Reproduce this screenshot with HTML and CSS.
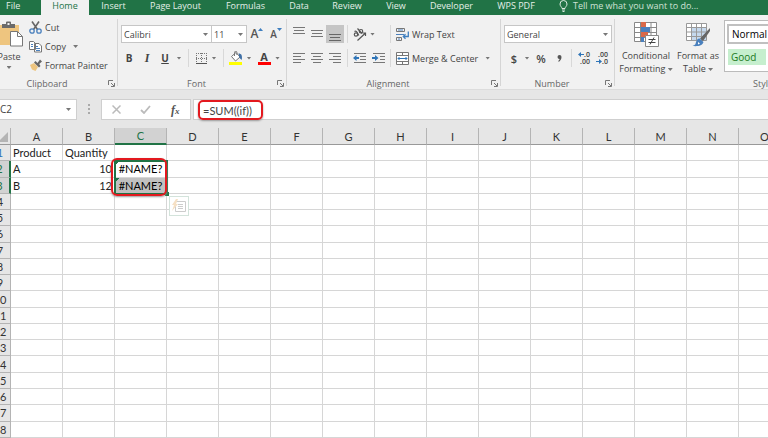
FILE: index.html
```html
<!DOCTYPE html>
<html lang="en">
<head>
<meta charset="utf-8">
<title>Workbook</title>
<link rel="stylesheet" href="styles.css">
</head>
<body>
<nav class="tabs" aria-label="Ribbon tabs">
  <button class="tab tab-file">File</button>
  <button class="tab tab-active">Home</button>
  <button class="tab">Insert</button>
  <button class="tab">Page Layout</button>
  <button class="tab">Formulas</button>
  <button class="tab">Data</button>
  <button class="tab">Review</button>
  <button class="tab">View</button>
  <button class="tab">Developer</button>
  <button class="tab">WPS PDF</button>
  <button class="tab tab-tell">
    <svg width="9" height="12" viewBox="0 0 9 12" fill="none" stroke="#dcebe2"><path d="M3 8.500C3 7 1 6.300 1 4a3.500 3.500 0 0 1 7 0C8 6.300 6 7 6 8.500zM3 10h3M3.500 11.500h2"/></svg>
    <span>Tell me what you want to do...</span>
  </button>
</nav>

<main class="ribbon">
  <section class="group clipboard" aria-label="Clipboard">
    <div class="body">
      <button class="paste">
        <svg width="28" height="26" viewBox="0 0 28 26"><path fill="#eec57f" d="M2 4h22v20H2z"/><path fill="#6a6a6a" d="M7 7V3h4V1.500a1 1 0 0 1 1-1h3a1 1 0 0 1 1 1V3h4v4z"/><path fill="#f1f1f1" d="M12.500 2h2v2h-2z"/><path fill="#fff" stroke="#777" d="M15.500 10.500h7l5 5v9.500h-12z"/><path fill="none" stroke="#777" d="M22.500 10.500v5h5"/></svg>
        <span>Paste</span>
        <i class="caret"></i>
      </button>
      <div class="stack">
        <button class="command">
          <svg width="13" height="13" viewBox="0 0 13 13" fill="none"><path stroke="#666" stroke-width="1.600" d="M3 .5l5.500 8M10 .5l-5.500 8"/><circle cx="3" cy="10" r="2.200" stroke="#4a80bd" stroke-width="1.300"/><circle cx="10" cy="10" r="2.200" stroke="#4a80bd" stroke-width="1.300"/></svg>
          <span>Cut</span>
        </button>
        <button class="command">
          <svg width="13" height="13" viewBox="0 0 13 13" fill="#fff" stroke="#777"><path d="M.5 1.500h4l2 2v6h-6zM5.500 3.500h4.500l2.500 2.500v6h-7z"/><path stroke="#4a80bd" d="M2 4.500h2M2 6.500h2M7 6.500h2M7 8.500h4M7 10.500h4"/></svg>
          <span>Copy</span><i class="caret"></i>
        </button>
        <button class="command">
          <svg width="13" height="13" viewBox="0 0 13 13"><path fill="#eec57f" d="M1 6l4-2 4 4-2.500 4L3 10.500z"/><path fill="#666" d="M5 3.500l1.500-1.500 2 2L11 .5l2 2-2.800 2.500L11.500 7 10 8.500z"/></svg>
          <span>Format Painter</span>
        </button>
      </div>
    </div>
    <h2 class="label">Clipboard</h2>
    <button class="launcher" aria-label="Clipboard settings"><svg width="7" height="7" viewBox="0 0 7 7"><path fill="none" stroke="#777" d="M.5 5V.5H5M3 3l3 3M6.500 3v3.500H3"/></svg></button>
  </section>

  <section class="group font" aria-label="Font">
    <div class="body rows">
      <div class="row font-top">
        <label class="picker"><select aria-label="Font name"><option>Calibri</option></select><i class="caret"></i></label>
        <label class="picker"><select aria-label="Font size"><option>11</option></select><i class="caret"></i></label>
        <button class="tool grow" aria-label="Increase font size"><b>A</b><svg width="5" height="3" viewBox="0 0 5 3"><path fill="#3f7fbf" d="M0 3l2.500-3L5 3z"/></svg></button>
        <button class="tool grow small" aria-label="Decrease font size"><b>A</b><svg width="5" height="3" viewBox="0 0 5 3"><path fill="#3f7fbf" d="M0 0h5L2.500 3z"/></svg></button>
      </div>
      <div class="row font-bottom">
        <button class="tool bold">B</button>
        <button class="tool italic">I</button>
        <button class="tool underline">U</button>
        <i class="caret"></i>
        <i class="rule"></i>
        <button class="tool" aria-label="Borders"><svg width="11" height="11" viewBox="0 0 11 11" fill="none" stroke="#777"><path stroke-dasharray="1 1" d="M.5 0v10M5.500 0v10M10.500 0v10M0 .5h11M0 5.500h11"/><path stroke="#555" d="M0 10.500h11"/></svg></button>
        <i class="caret"></i>
        <i class="rule"></i>
        <button class="tool" aria-label="Fill color"><svg width="14" height="14" viewBox="0 0 14 14"><path fill="#fff" stroke="#777" d="M2.500 5.500l4.500-4 4 4.500-4.500 4z"/><path fill="none" stroke="#777" d="M5.500 5V1.500a1.200 1.200 0 0 1 2.400 0V4"/><path fill="#3f6fa5" d="M9.500 2.500c3 0 4 2 3.200 6.500L10.500 7z"/><path fill="#ff0" d="M0 11h13v3H0z"/></svg></button>
        <i class="caret"></i>
        <button class="tool" aria-label="Font color"><span class="font-color">A</span></button>
        <i class="caret"></i>
      </div>
    </div>
    <h2 class="label">Font</h2>
    <button class="launcher" aria-label="Font settings"><svg width="7" height="7" viewBox="0 0 7 7"><path fill="none" stroke="#777" d="M.5 5V.5H5M3 3l3 3M6.500 3v3.500H3"/></svg></button>
  </section>

  <section class="group alignment" aria-label="Alignment">
    <div class="body rows">
      <div class="row align-row">
        <button class="tool" aria-label="Top align"><svg width="12" height="16" viewBox="0 0 12 16" stroke="#777"><path d="M0 1.500h12M1 4.500h10M0 7.500h12"/></svg></button>
        <button class="tool" aria-label="Middle align"><svg width="12" height="16" viewBox="0 0 12 16" stroke="#777"><path d="M0 4.500h12M1 7.500h10M0 10.500h12"/></svg></button>
        <button class="tool pressed" aria-label="Bottom align"><svg width="12" height="16" viewBox="0 0 12 16" stroke="#666"><path d="M0 8.500h12M1 11.500h10M0 14.500h12"/></svg></button>
        <i class="rule"></i>
        <button class="tool" aria-label="Orientation"><svg width="14" height="13" viewBox="0 0 14 13" fill="none" stroke="#555" stroke-width="1.200"><path d="M4.500 12.500L12 5.500M9.500 5h3v3"/><circle cx="3" cy="6.500" r="1.700"/><path d="M1.500 3.500c1.500-1 2.500 0 4.300 4M4.500.5l4.500 5"/><circle cx="8" cy="3.200" r="1.700"/></svg></button>
        <i class="caret"></i>
        <i class="rule"></i>
        <button class="command wide"><svg width="13" height="13" viewBox="0 0 13 13" fill="none"><path stroke="#777" d="M.5.5h8v3h-8zM.5 9.500h5v3h-5z"/><path stroke="#4a80bd" d="M2 2h5M0 6.500h8M2 11h2"/><path stroke="#3f7fbf" stroke-width="1.300" d="M12.300 3.500v5H7.500M9.500 6.300L7.300 8.500l2.200 2.200"/></svg><span>Wrap Text</span></button>
      </div>
      <div class="row align-row">
        <button class="tool" aria-label="Align left"><svg width="12" height="10" viewBox="0 0 12 10" stroke="#777"><path d="M0 .5h12M0 3.500h8M0 6.500h12M0 9.500h8"/></svg></button>
        <button class="tool" aria-label="Center"><svg width="12" height="10" viewBox="0 0 12 10" stroke="#777"><path d="M0 .5h12M2 3.500h8M0 6.500h12M2 9.500h8"/></svg></button>
        <button class="tool" aria-label="Align right"><svg width="12" height="10" viewBox="0 0 12 10" stroke="#777"><path d="M0 .5h12M4 3.500h8M0 6.500h12M4 9.500h8"/></svg></button>
        <i class="rule"></i>
        <button class="tool" aria-label="Decrease indent"><svg width="14" height="12" viewBox="0 0 14 12"><path stroke="#777" d="M1 1.500h12M7 4.500h6M7 7.500h6M1 10.500h12"/><path fill="#2f75b8" d="M0 6l3.500-3v2H6v2H3.500v2z"/></svg></button>
        <button class="tool" aria-label="Increase indent"><svg width="14" height="12" viewBox="0 0 14 12"><path stroke="#777" d="M1 1.500h12M8 4.500h5M8 7.500h5M1 10.500h12"/><path fill="#2f75b8" d="M6.500 6L3 3v2H0v2h3v2z"/></svg></button>
        <i class="rule"></i>
        <button class="command wide"><svg width="13" height="13" viewBox="0 0 13 13" fill="#fff" stroke="#777"><path d="M.5.5h12v12H.5zM.5 3.500h12M.5 9.500h12M6.500.5v3M6.500 9.500v3"/><path fill="none" stroke="#2f75b8" d="M2 6.500h9M3.500 5L2 6.500 3.500 8M9.500 5L11 6.500 9.500 8"/></svg><span>Merge &amp; Center</span><i class="caret"></i></button>
      </div>
    </div>
    <h2 class="label">Alignment</h2>
    <button class="launcher" aria-label="Alignment settings"><svg width="7" height="7" viewBox="0 0 7 7"><path fill="none" stroke="#777" d="M.5 5V.5H5M3 3l3 3M6.500 3v3.500H3"/></svg></button>
  </section>

  <section class="group number" aria-label="Number">
    <div class="body rows">
      <div class="row number-top">
        <label class="picker"><select aria-label="Number format"><option>General</option></select><i class="caret"></i></label>
      </div>
      <div class="row number-bottom">
        <button class="tool symbol">$</button>
        <i class="caret"></i>
        <button class="tool symbol">%</button>
        <button class="tool" aria-label="Comma style"><svg width="5" height="7" viewBox="0 0 5 7"><path fill="#555" d="M.5 2a2 2 0 0 1 4 0c0 2.500-1.500 4-3 5V5.500C2.300 5 2.500 4.500 2.500 4A2 2 0 0 1 .5 2z"/></svg></button>
        <i class="rule"></i>
        <button class="tool decimals" aria-label="Increase decimal"><span><svg width="6" height="5" viewBox="0 0 6 5"><path fill="#2f75b8" d="M0 2.500L3 0v2h3v1H3v2z"/></svg>.0</span><span>.00</span></button>
        <button class="tool decimals" aria-label="Decrease decimal"><span>.00</span><span><svg width="6" height="5" viewBox="0 0 6 5"><path fill="#2f75b8" d="M6 2.500L3 0v2H0v1h3v2z"/></svg>.0</span></button>
      </div>
    </div>
    <h2 class="label">Number</h2>
    <button class="launcher" aria-label="Number settings"><svg width="7" height="7" viewBox="0 0 7 7"><path fill="none" stroke="#777" d="M.5 5V.5H5M3 3l3 3M6.500 3v3.500H3"/></svg></button>
  </section>

  <section class="group styles" aria-label="Styles">
    <div class="body">
      <button class="large">
        <svg width="26" height="26" viewBox="0 0 26 26"><path fill="#fff" stroke="#888" d="M1.500 1.500h22v19h-22zM1.500 6.500h22M1.500 11.500h22M1.500 16.500h22M7.500 1.500v19M12.500 1.500v19M18 1.500v19"/><path fill="#d9694a" d="M8 1h5v5H8zM8 11h7v5H8z"/><path fill="#4a80bd" d="M8 6h9v5H8zM8 16h3v5H8z"/><path fill="#fff" stroke="#888" d="M12.500 14.500h13v11h-13z"/><path stroke="#444" d="M15.500 18.500h7M15.500 21.500h7M21 16.500l-4 7"/></svg>
        <span>Conditional</span><span>Formatting <i class="caret"></i></span>
      </button>
      <button class="large">
        <svg width="26" height="26" viewBox="0 0 26 26"><path fill="#fff" d="M2 2h19v18H2z"/><path fill="#c5d9ee" d="M7 6h14v14H7z"/><path fill="none" stroke="#999" d="M1.500 2.500h20v17h-20zM1.500 6.500h20M1.500 11h20M1.500 15.500h20M6.500 2.500v17M11.500 2.500v17M16.500 2.500v17"/><path fill="#666" d="M25 7v3l-7 10-3-2.500z"/><path fill="#4a80bd" d="M14.500 17.500l4 3.500c-1 4-6 4.500-11 4 3-1 3-2 3.500-4 .5-2 1.800-3.300 3.500-3.500z"/><path fill="#fff" d="M13 21l2 1.500-2 1z"/></svg>
        <span>Format as</span><span>Table <i class="caret"></i></span>
      </button>
      <div class="gallery">
        <button class="swatch swatch-normal">Normal</button>
        <button class="swatch swatch-good">Good</button>
      </div>
    </div>
    <h2 class="label">Styles</h2>
  </section>
</main>

<div class="formula-bar">
  <label class="name-box"><input aria-label="Name box" value="C2"><i class="caret"></i></label>
  <svg class="grip" width="3" height="11" viewBox="0 0 3 11" fill="#aaa"><path d="M0 0h2v2H0zM0 4h2v2H0zM0 8h2v2H0z"/></svg>
  <div class="entry">
    <button class="tool" aria-label="Cancel"><svg width="9" height="9" viewBox="0 0 9 9" stroke="#bbb" stroke-width="1.500"><path d="M.5.500l8 8M8.500.500l-8 8"/></svg></button>
    <button class="tool" aria-label="Enter"><svg width="11" height="9" viewBox="0 0 11 9" fill="none" stroke="#bbb" stroke-width="1.800"><path d="M1 5l3 3 6-7"/></svg></button>
    <button class="tool fx" aria-label="Insert function"><i>f</i><small>x</small></button>
  </div>
  <div class="formula">
    <input aria-label="Formula" value="=SUM((if))">
  </div>
</div>

<div class="sheet">
  <table>
    <thead>
      <tr><th class="corner"><svg width="10" height="10" viewBox="0 0 10 10"><path fill="#b4b4b4" d="M10 0v10H0z"/></svg></th><th>A</th><th>B</th><th class="selected">C</th><th>D</th><th>E</th><th>F</th><th>G</th><th>H</th><th>I</th><th>J</th><th>K</th><th>L</th><th>M</th><th>N</th><th>O</th></tr>
    </thead>
    <tbody>
      <tr><th class="first">1</th><td>Product</td><td>Quantity</td><td></td><td></td><td></td><td></td><td></td><td></td><td></td><td></td><td></td><td></td><td></td><td></td><td></td></tr>
      <tr><th class="selected">2</th><td>A</td><td class="num">10</td><td class="error">#NAME?<div class="selection"></div><div class="callout"></div>
        <button class="quick" aria-label="Quick analysis"><svg width="14" height="14" viewBox="0 0 14 14" fill="none" stroke="#ccc"><path d="M3.500 2.500h10v10h-10zM6 5.500h5M6 7.500h5M6 9.500h5"/><path fill="#f6e0c4" stroke="none" d="M4 0L0 6h2L0 12l6-7H4l2-5z"/></svg></button></td><td></td><td></td><td></td><td></td><td></td><td></td><td></td><td></td><td></td><td></td><td></td><td></td></tr>
      <tr><th class="selected">3</th><td>B</td><td class="num">12</td><td class="error shaded">#NAME?</td><td></td><td></td><td></td><td></td><td></td><td></td><td></td><td></td><td></td><td></td><td></td><td></td></tr>
    </tbody>
  </table>
</div>
<script src="sheet.js"></script>
</body>
</html>
```
FILE: styles.css
```css
* { box-sizing: border-box; }

body {
  margin: 0;
  height: 100vh;
  display: flex;
  flex-direction: column;
  overflow: hidden;
  background: #fff;
  color: #444;
  font: 9px/13px "Open Sans", "Noto Sans", sans-serif;
}

button, input, select {
  margin: 0;
  padding: 0;
  border: 0;
  background: none;
  color: inherit;
  font: inherit;
}

svg { display: block; flex: none; }

.caret {
  display: inline-block;
  flex: none;
  width: 5px;
  height: 3px;
  background: #777;
  clip-path: polygon(0 0, 100% 0, 50% 100%);
}

/* Tabs */
.tabs {
  display: grid;
  grid-template-columns: 41px 48px 49px 75px 65px 42px 54px 44px 67px 62px 1fr;
  background: #217346;
  color: #e4efe8;
  white-space: nowrap;
}

.tab { height: 15px; padding-bottom: 3px; line-height: 12px; }
.tab-file { padding-left: 6px; text-align: left; }
.tab-active { background: #f1f1f1; color: #217346; }
.tab-tell { display: flex; align-items: center; gap: 5px; padding-left: 12px; color: #cfe2d6; }

/* Ribbon */
.ribbon {
  display: flex;
  height: 75px;
  background: #f1f1f1;
  border-bottom: 1px solid #dcdcdc;
  white-space: nowrap;
}

.group { position: relative; display: flex; flex-direction: column; flex: none; }
.group::after {
  content: "";
  position: absolute;
  top: 4px;
  right: 0;
  bottom: 3px;
  width: 1px;
  background: #d5d5d5;
}
.clipboard { width: 118px; }
.font { width: 169px; }
.alignment { width: 214px; }
.number { width: 114px; }
.styles { flex: 1; min-width: 153px; overflow: hidden; }
.styles::after { display: none; }

.body { display: flex; flex: none; height: 63px; padding-top: 3px; }
.rows { flex-direction: column; padding-top: 7px; }
.row { display: grid; align-items: center; height: 24px; }
.label { margin: 0; color: #666; font-size: 9px; font-weight: 400; line-height: 12px; text-align: center; }
.clipboard .label { padding-right: 24px; }
.font .label,
.alignment .label,
.number .label { padding-right: 12px; }
.styles .label { padding-left: 138px; text-align: left; }

.launcher { position: absolute; right: 3px; bottom: 2px; }

.paste {
  display: flex;
  flex-direction: column;
  align-items: center;
  gap: 3px;
  width: 28px;
  margin: 3px 6px 0 -5px;
}
.stack { display: grid; grid-template-rows: repeat(3, 19px); }
.command { display: flex; align-items: center; gap: 3px; }

.tool { display: flex; align-items: center; justify-content: center; height: 18px; }
.rule { width: 1px; height: 18px; background: #d8d8d8; justify-self: center; }
.row .caret { justify-self: center; }
.command .caret { margin-left: 4px; }

.picker {
  position: relative;
  display: flex;
  height: 18px;
  background: #fff;
  border: 1px solid #c6c6c6;
}
.picker select { flex: 1; min-width: 0; padding-left: 2px; appearance: none; }
.picker .caret { position: absolute; top: 7px; right: 3px; }

.font-top { grid-template-columns: 91px 35px 20px 18px; padding-left: 3px; }
.font-top .picker + .picker { margin-left: -1px; }
.grow { align-items: flex-start; font-size: 12px; line-height: 18px; color: #555; }
.grow b { font-weight: 600; }
.grow svg { margin-top: 3px; }
.small { font-size: 10px; }

.font-bottom { grid-template-columns: 18px 18px 18px 10px 9px 16px 10px 9px 16px 10px 20px 7px; padding-left: 2px; }
.bold { font-size: 10px; font-weight: 700; }
.italic { font: italic 700 12px "Liberation Serif", serif; }
.underline { font-size: 10px; font-weight: 700; text-decoration: underline; }
.font-color { width: 13px; border-bottom: 3px solid #f00; font-size: 11px; font-weight: 700; line-height: 11px; }

.align-row { grid-template-columns: 18px 18px 18px 6px 20px 18px 5px 1fr; padding-left: 3px; }
.align-row > .caret { justify-self: start; }
.wide { padding-left: 3px; }
.pressed { background: #c5c5c5; }

.number-top { padding: 0 3px; }
.number-bottom { grid-template-columns: 18px 8px 20px 16px 8px 18px 18px; padding-left: 4px; }
.symbol { font-size: 11px; font-weight: 600; }
.decimals { flex-direction: column; align-items: flex-end; font-size: 7px; font-weight: 600; line-height: 7px; padding-right: 3px; }
.decimals span { display: flex; align-items: center; }

.large {
  display: flex;
  flex-direction: column;
  align-items: center;
  width: 52px;
  margin-top: 3px;
}
.large svg { margin-bottom: 2px; }
.large .caret { vertical-align: middle; }
.styles .body { padding-left: 5px; }
.gallery {
  display: flex;
  flex-direction: column;
  flex: 1;
  gap: 3px;
  height: 52px;
  margin-top: 2px;
  padding: 3px 0 0 2px;
  background: #fff;
  border: 1px solid #bbb;
  border-right: 0;
}
.swatch { height: 20px; padding-left: 3px; border: 2px solid #fff; border-left-width: 1px; font-size: 10px; line-height: 12px; text-align: left; }
.swatch-normal { border-color: #c0c0c0; border-width: 2px 0 2px 2px; color: #000; }
.swatch-good { background: #c6efce; color: #1b7a1b; }

/* Formula bar */
.formula-bar {
  display: grid;
  grid-template-columns: 77px 24px 90px 1fr;
  align-items: center;
  height: 38px;
  padding: 9px 0 8px;
  background: #e6e6e6;
}
.name-box, .entry, .formula { height: 21px; background: #fff; border: 1px solid #cfcfcf; }
.name-box { display: flex; align-items: center; justify-content: space-between; border-left: 0; padding-right: 5px; }
.name-box input { width: 40px; font-size: 10px; }
.grip { justify-self: center; }
.entry { display: grid; grid-template-columns: 1fr 1fr 1fr; align-items: center; }
.fx { font: 700 12px/16px "Liberation Serif", serif; color: #555; }
.fx small { font-size: 9px; font-style: italic; padding-top: 3px; }
.formula { margin-left: 2px; padding: 0 4px; border-right: 0; }
.formula input {
  width: 65px;
  height: 20px;
  padding-left: 3px;
  border: 2px solid #e3191f;
  border-radius: 5px;
  box-shadow: 0 1px 2px #999;
  font: 11px "Lato", sans-serif;
}

/* Sheet */
.sheet { flex: 1; min-height: 0; background: #e6e6e6; }
table {
  width: 801px;
  height: 100%;
  margin-left: -10px;
  border-collapse: separate;
  border-spacing: 0;
  table-layout: fixed;
  background: #fff;
  color: #222;
  font: 11px/12px "Lato", sans-serif;
}
th, td { width: 52px; padding: 1px 2px 0; border: 0 solid #d6d6d6; border-width: 0 1px 1px 0; white-space: nowrap; }
th { background: #e6e6e6; border-color: #b4b4b4; color: #333; font-weight: 400; }
th:first-child { width: 21px; padding: 1px 0 0; }
thead th { height: 17px; border-bottom-color: #999; }
.corner svg { margin-left: 8px; }
th.selected { background: #d2d2d2; color: #217346; }
th.first { color: #2f75b8; }
thead .selected { border-bottom: 2px solid #217346; }
tbody .selected { border-right: 2px solid #217346; }
td { text-align: left; }
.num { text-align: right; }
.error { position: relative; color: #000; text-align: center; background: linear-gradient(135deg, #217346 3px, transparent 3px); }
.shaded { background: linear-gradient(135deg, #217346 3px, #c0c0c0 3px); }
.selection { position: absolute; z-index: 1; top: -1px; left: -1px; width: 54px; height: 35px; border: 2px solid #217346; }
.selection::after { content: ""; position: absolute; right: -3px; bottom: -3px; width: 4px; height: 4px; background: #217346; }
.callout { position: absolute; z-index: 2; top: -3px; left: -4px; width: 56px; height: 38px; border: 2px solid #e3191f; border-radius: 6px; box-shadow: 0 1px 2px #999; }
.quick { position: absolute; z-index: 1; top: 35px; left: 54px; width: 20px; height: 20px; padding: 2px; background: #fff; border: 1px solid #d3e3db; }
```
FILE: sheet.js
```js
// Fill the sheet with empty numbered rows below the data.
const body = document.querySelector("tbody");
for (let n = 4; n <= 18; n++) {
  const row = body.insertRow();
  const head = document.createElement("th");
  head.textContent = n;
  row.append(head);
  for (let c = 0; c < 15; c++) row.insertCell();
}
```
